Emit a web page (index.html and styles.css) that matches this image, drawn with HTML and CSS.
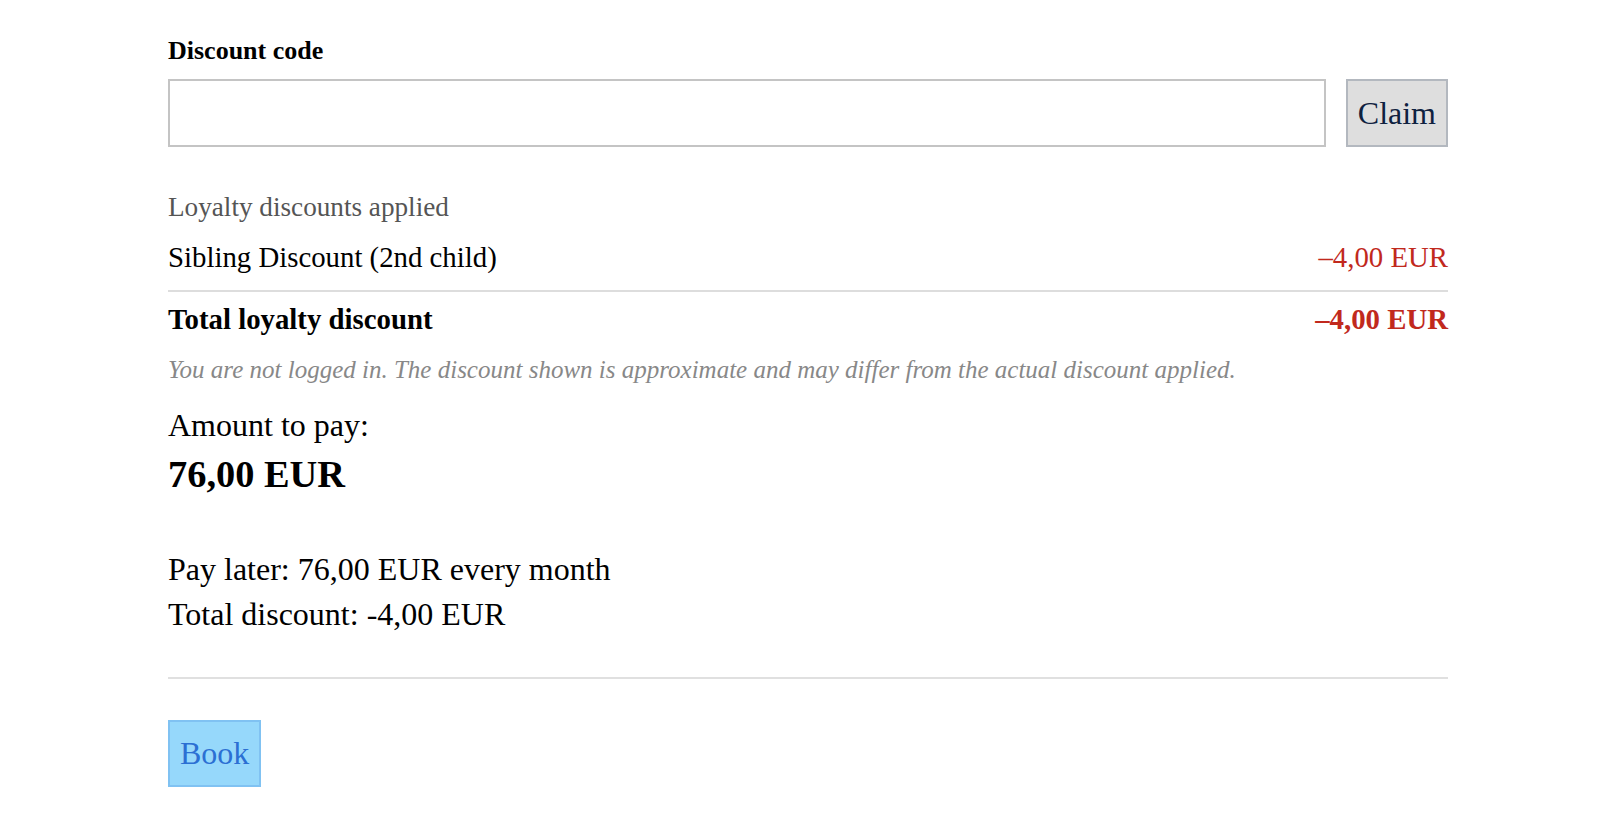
FILE: index.html
```html
<!DOCTYPE html>
<html lang="en">
<head>
<meta charset="utf-8">
<title>Checkout</title>
<link rel="stylesheet" href="styles.css">
</head>
<body>
<main class="checkout">
  <label class="field-label" for="code">Discount code</label>
  <div class="code-row">
    <input class="code-input" id="code" type="text">
    <button class="btn btn-claim" type="button">Claim</button>
  </div>

  <section class="loyalty">
    <div class="loyalty-title">Loyalty discounts applied</div>
    <div class="loyalty-row loyalty-item">
      <span>Sibling Discount (2nd child)</span>
      <span class="neg">–4,00 EUR</span>
    </div>
    <div class="loyalty-row loyalty-total">
      <span>Total loyalty discount</span>
      <span class="neg">–4,00 EUR</span>
    </div>
    <p class="note">You are not logged in. The discount shown is approximate and may differ from the actual discount applied.</p>
  </section>

  <div class="amount-label">Amount to pay:</div>
  <div class="amount">76,00 EUR</div>

  <div class="summary">
    <div>Pay later: 76,00 EUR every month</div>
    <div>Total discount: -4,00 EUR</div>
  </div>

  <hr class="divider">

  <button class="btn btn-book" type="button">Book</button>
</main>
</body>
</html>
```

FILE: styles.css
```css
* { box-sizing: border-box; }

html, body {
  margin: 0;
  padding: 0;
  background: #ffffff;
}

body {
  font-family: "Liberation Serif", "Times New Roman", serif;
  color: #000;
  padding-right: 4px;
}

.checkout {
  width: 1280px;
  margin: 0 auto;
  padding-top: 36px;
}

.field-label {
  display: block;
  font-size: 26px;
  font-weight: bold;
  line-height: 30px;
  margin-bottom: 13px;
}

.code-row {
  display: flex;
  gap: 20px;
  align-items: stretch;
}

.code-input {
  flex: 1;
  height: 68px;
  border: 2px solid #c4c4c4;
  background: #fff;
  font-family: inherit;
  font-size: 32px;
  padding: 0 12px;
  margin: 0;
  outline: none;
}

.btn {
  font-family: "Liberation Serif", "Times New Roman", serif;
  font-size: 32px;
  height: 68px;
  padding: 0 10px;
  margin: 0;
  border-radius: 0;
  cursor: pointer;
}

.btn-claim {
  background: #dedede;
  border: 2px solid #b3b8bf;
  color: #0e213f;
}

.loyalty {
  margin-top: 41px;
}

.loyalty-title {
  font-size: 27.2px;
  line-height: 38px;
  color: #555;
  margin-bottom: 11px;
}

.loyalty-row {
  display: flex;
  justify-content: space-between;
  font-size: 28.8px;
  line-height: 40px;
}

.loyalty-item {
  padding-bottom: 13px;
}

.loyalty-total {
  border-top: 2px solid #dddddd;
  padding-top: 7px;
  font-weight: bold;
}

.neg {
  color: #c1291d;
}

.note {
  margin: 13px 0 0;
  font-size: 25px;
  line-height: 35px;
  font-style: italic;
  color: #888;
}

.amount-label {
  margin-top: 16px;
  font-size: 32px;
  line-height: 44.8px;
}

.amount {
  margin-top: 2px;
  font-size: 38.4px;
  font-weight: bold;
  line-height: 48px;
}

.summary {
  margin-top: 49px;
  font-size: 32px;
  line-height: 44.8px;
}

.divider {
  margin: 41px 0 0;
  border: 0;
  border-top: 2px solid #e0e0e0;
  height: 0;
}

.btn-book {
  margin-top: 41px;
  height: 67px;
  background: #96d8fb;
  border: 2px solid #80c2f2;
  color: #2b6fd3;
}
```
